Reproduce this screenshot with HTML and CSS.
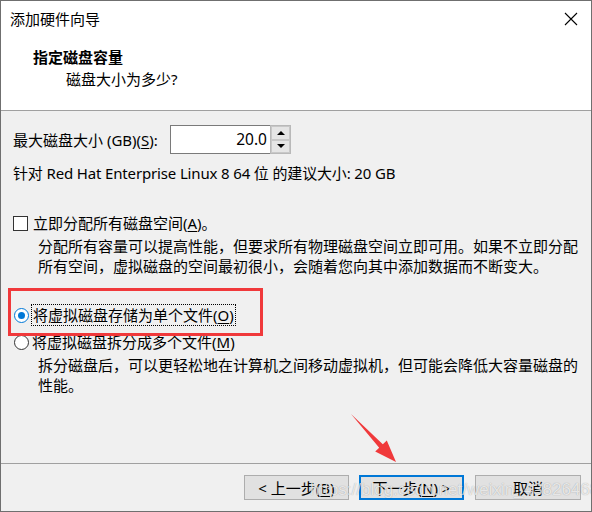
FILE: index.html
```html
<!DOCTYPE html>
<html lang="zh-CN">

<head>
    <meta charset="UTF-8">
    <title>添加硬件向导</title>
    <link rel="stylesheet" href="styles.css">
</head>

<body>
    <div class="window">
        <div class="top">
            <div class="titlebar">
                <span class="title">添加硬件向导</span>
                <svg class="close" width="14" height="14" viewBox="0 0 14 14">
                    <path d="M1 1 L13 13 M13 1 L1 13" stroke="#000" stroke-width="1.1" fill="none"/>
                </svg>
            </div>
            <div class="heading">指定磁盘容量</div>
            <div class="subheading">磁盘大小为多少?</div>
        </div>

        <div class="body">
            <div class="size-row">
                <label class="size-label">最大磁盘大小 (GB)(<u>S</u>):</label>
                <div class="spin">
                    <div class="spin-value">20.0</div>
                    <div class="spin-buttons">
                        <div class="spin-btn"><span class="tri-up"></span></div>
                        <div class="spin-btn"><span class="tri-down"></span></div>
                    </div>
                </div>
            </div>
            <div class="recommend">针对 Red Hat Enterprise Linux 8 64 位 的建议大小: 20 GB</div>

            <div class="option check-row">
                <span class="checkbox"></span>
                <span>立即分配所有磁盘空间(<u>A</u>)。</span>
            </div>
            <div class="desc">分配所有容量可以提高性能，但要求所有物理磁盘空间立即可用。如果不立即分配<br>所有空间，虚拟磁盘的空间最初很小，会随着您向其中添加数据而不断变大。</div>

            <div class="option radio-row first">
                <span class="radio checked"></span>
                <span class="focus">将虚拟磁盘存储为单个文件(<u>O</u>)</span>
            </div>
            <div class="option radio-row">
                <span class="radio"></span>
                <span>将虚拟磁盘拆分成多个文件(<u>M</u>)</span>
            </div>
            <div class="desc">拆分磁盘后，可以更轻松地在计算机之间移动虚拟机，但可能会降低大容量磁盘的<br>性能。</div>
        </div>

        <div class="footer">
            <button class="btn">&lt; 上一步(<u>B</u>)</button>
            <button class="btn primary">下一步(<u>N</u>) &gt;</button>
            <button class="btn cancel">取消</button>
        </div>

        <!-- annotation drawn over the screenshot -->
        <div class="highlight"></div>
        <svg class="arrow" width="592" height="512" viewBox="0 0 592 512">
            <polygon points="351,414 382.8,444.3 386.8,440.6 396,462 375.2,451.4 379.2,447.7" fill="#f0393b"/>
        </svg>
        <div class="watermark">https://blog.csdn.net/weixin_43826468</div>
    </div>
</body>

</html>
```

FILE: styles.css
```css
body {
    margin: 0;
    font-family: "Noto Sans", "Noto Sans CJK SC", sans-serif;
    font-size: 15px;
    color: #000;
    background-color: #fff;
}

u {
    text-decoration: underline;
    text-underline-offset: 2px;
}

.window {
    position: relative;
    width: 592px;
    height: 512px;
    box-sizing: border-box;
    border: 1px solid #6f6f6f;
    display: flex;
    flex-direction: column;
    overflow: hidden;
}

/* White header */
.top {
    background-color: #fff;
    height: 110px;
    box-sizing: border-box;
    border-bottom: 1px solid #a0a0a0;
}

.titlebar {
    height: 36px;
    display: flex;
    align-items: center;
    justify-content: space-between;
    padding-left: 9px;
    padding-right: 13px;
}

.title {
    line-height: 20px;
}

.heading {
    margin-top: 10px;
    padding-left: 32px;
    font-weight: bold;
    line-height: 20px;
}

.subheading {
    margin-top: 2px;
    padding-left: 65px;
    line-height: 20px;
}

/* Content */
.body {
    flex: 1;
    background-color: #f0f0f0;
    padding: 14px 12px 0 12px;
    line-height: 20px;
}

.size-row {
    display: flex;
    align-items: center;
    height: 29px;
}

.size-label {
    width: 157px;
}

.spin {
    display: flex;
    height: 29px;
}

.spin-value {
    width: 100px;
    box-sizing: border-box;
    border: 1px solid #7a7a7a;
    border-right: none;
    background-color: #fff;
    text-align: right;
    padding-right: 3px;
    line-height: 27px;
    font-size: 15.5px;
}

.spin-buttons {
    width: 21px;
    box-sizing: border-box;
    border: 1px solid #b9b9b9;
    display: flex;
    flex-direction: column;
    background-color: #fff;
}

.spin-btn {
    flex: 1;
    background-color: #e5e5e5;
    border: 1px solid #c8c8c8;
    display: flex;
    align-items: center;
    justify-content: center;
}

.tri-up {
    width: 0;
    height: 0;
    border-left: 4px solid transparent;
    border-right: 4px solid transparent;
    border-bottom: 4px solid #000;
}

.tri-down {
    width: 0;
    height: 0;
    border-left: 4px solid transparent;
    border-right: 4px solid transparent;
    border-top: 4px solid #000;
}

.recommend {
    margin-top: 9px;
    letter-spacing: -0.15px;
}

.option {
    display: flex;
    align-items: center;
    height: 20px;
    gap: 5px;
}

.check-row {
    margin-top: 30px;
}

.checkbox {
    width: 15px;
    height: 15px;
    box-sizing: border-box;
    border: 1px solid #333;
    background-color: #fff;
}

.desc {
    margin-top: 3px;
    padding-left: 25px;
}

.radio-row {
    gap: 3px;
    margin-top: 7px;
}

.radio-row.first {
    margin-top: 29px;
}

.radio {
    width: 15px;
    height: 15px;
    box-sizing: border-box;
    border: 1px solid #333;
    border-radius: 50%;
    background-color: #fff;
    margin-left: 1px;
    position: relative;
}

.radio.checked {
    border-color: #0078d7;
}

.radio.checked::after {
    content: "";
    position: absolute;
    left: 3px;
    top: 3px;
    width: 7px;
    height: 7px;
    border-radius: 50%;
    background-color: #0078d7;
}

.focus {
    outline: 1px dotted #000;
    outline-offset: 0;
    padding: 0 1px;
}

/* Buttons */
.footer {
    height: 48px;
    box-sizing: border-box;
    border-top: 1px solid #a0a0a0;
    background-color: #f0f0f0;
    display: flex;
    justify-content: flex-end;
    align-items: flex-start;
    padding-top: 11px;
    padding-right: 10px;
}

.btn {
    width: 105px;
    height: 25px;
    margin-left: 10px;
    background-color: #e1e1e1;
    border: 1px solid #adadad;
    font-family: inherit;
    font-size: 15px;
    line-height: 20px;
    padding: 0;
    color: #000;
}

.btn.primary {
    border: 2px solid #0078d7;
}

.btn.cancel {
    width: 106px;
    margin-left: 11px;
}

/* Overlays */
.highlight {
    position: absolute;
    left: 7px;
    top: 287px;
    width: 255px;
    height: 48px;
    box-sizing: border-box;
    border: 3px solid #f0393b;
    pointer-events: none;
}

.arrow {
    position: absolute;
    left: -1px;
    top: -1px;
    pointer-events: none;
}

.watermark {
    position: absolute;
    left: 309px;
    top: 479px;
    font-family: "Liberation Sans", sans-serif;
    font-size: 17px;
    color: rgba(255, 255, 255, 0.75);
    text-shadow: 0 0 1px rgba(0, 0, 0, 0.35);
    white-space: nowrap;
    pointer-events: none;
}
```
